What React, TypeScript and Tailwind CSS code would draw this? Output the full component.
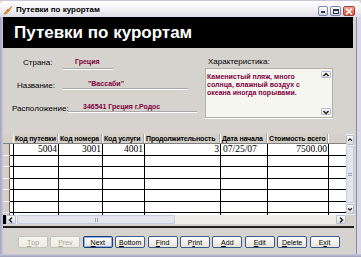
import React from 'react';

type Col = { title: string; w: string; value: string; right: boolean };

const columns: Col[] = [
  { title: 'Код путевки', w: 'w-[45px]', value: '5004', right: true },
  { title: 'Код номера', w: 'w-[44px]', value: '3001', right: true },
  { title: 'Код услуги', w: 'w-[42px]', value: '4001', right: true },
  { title: 'Продолжительность', w: 'w-[76px]', value: '3', right: true },
  { title: 'Дата начала', w: 'w-[47px]', value: '07/25/07', right: false },
  { title: 'Стоимость всего', w: 'w-[61px]', value: '7500.00', right: true },
];

const rowHeights = ['h-[12px]', 'h-[11px]', 'h-[12px]', 'h-[11px]', 'h-[12px]', 'h-[11px]', 'h-[11px]'];

const buttons = [
  { pre: '', key: 'T', post: 'op', disabled: true },
  { pre: '', key: 'P', post: 'rev', disabled: true },
  { pre: '', key: 'N', post: 'ext', focused: true },
  { pre: '', key: 'B', post: 'ottom' },
  { pre: '', key: 'F', post: 'ind' },
  { pre: 'P', key: 'r', post: 'int' },
  { pre: '', key: 'A', post: 'dd' },
  { pre: '', key: 'E', post: 'dit' },
  { pre: '', key: 'D', post: 'elete' },
  { pre: 'E', key: 'x', post: 'it' },
];

function Chevron({ dir }: { dir: 'up' | 'down' | 'left' | 'right' }) {
  const pts = {
    up: '1.5,5 4,2.5 6.5,5',
    down: '1.5,3 4,5.5 6.5,3',
    left: '5,1.5 2.5,4 5,6.5',
    right: '3,1.5 5.5,4 3,6.5',
  }[dir];
  return (
    <svg width="8" height="8" viewBox="0 0 8 8">
      <polyline points={pts} fill="none" stroke="#222" strokeWidth="1.5" />
    </svg>
  );
}

function ArrowBox({ dir, className }: { dir: 'up' | 'down' | 'left' | 'right'; className: string }) {
  return (
    <div className={`flex items-center justify-center border border-[#b4bed6] rounded-[1px] bg-gradient-to-b from-[#fafafa] to-[#dedcd6] ${className}`}>
      <Chevron dir={dir} />
    </div>
  );
}

function TitleBar() {
  return (
    <div className="h-[17px] flex items-end pb-[1px] bg-gradient-to-b from-[#ffffff] via-[#f2f2f6] to-[#dcdce6] rounded-t-[4px] border-t border-[#c8c8d8]">
      <svg width="11" height="10" viewBox="0 0 11 10" className="ml-[3px] mb-[1px]">
        <path d="M1 9 L5 4 L4 6 L9 1 L6 6 L7 5 L3 9 Z" fill="#f0a020" stroke="#c06010" strokeWidth="0.6" />
      </svg>
      <span className="ml-[2px] mb-[1px] text-[8px] leading-[10px] text-black font-bold whitespace-nowrap">Путевки по курортам</span>
      <div className="ml-auto mr-[6px] flex gap-[2px] items-end">
        <div className="w-[10px] h-[10px] border border-[#7884a8] rounded-[2px] bg-gradient-to-b from-white to-[#cfd0dc] flex items-end justify-center pb-[2px]">
          <div className="w-[4px] h-[2px] bg-[#303848]" />
        </div>
        <div className="w-[11px] h-[10px] border border-[#7884a8] rounded-[2px] bg-gradient-to-b from-white to-[#cfd0dc] flex items-center justify-center">
          <div className="w-[6px] h-[5px] border border-[#303848] border-t-2" />
        </div>
        <div className="w-[12px] h-[10px] border border-[#a04040] rounded-[2px] bg-gradient-to-b from-[#f8a890] to-[#d84828] flex items-center justify-center">
          <svg width="8" height="7" viewBox="0 0 8 7">
            <path d="M1 0.5 L7 6.5 M7 0.5 L1 6.5" stroke="#fff" strokeWidth="1.5" />
          </svg>
        </div>
      </div>
    </div>
  );
}

function Field({ label, value, rowClass, labelClass, boxClass }: { label: string; value: string; rowClass: string; labelClass: string; boxClass: string }) {
  return (
    <div className={`flex items-end ${rowClass}`}>
      <div className={`text-[8px] leading-[9px] whitespace-nowrap ${labelClass}`}>{label}</div>
      <div className={`border-b border-[#a8a8a8] shadow-[0_1px_0_#ffffff] text-[7px] font-bold leading-[8px] text-[#80003c] whitespace-nowrap ${boxClass}`}>{value}</div>
    </div>
  );
}

function Datasheet() {
  return (
    <div className="flex-1 min-w-0 flex flex-col bg-white overflow-hidden">
      <div className="flex h-[10px] shrink-0 bg-[#d4d0c8] border-b border-[#808080]">
        <div className="w-[11px] shrink-0 border-r border-white" />
        {columns.map((c) => (
          <div key={c.title} className={`${c.w} shrink-0 border-r border-white shadow-[inset_-1px_0_0_#a8a8a8] pl-[1px] text-[7px] tracking-[-0.15px] font-bold leading-[9px] whitespace-nowrap overflow-hidden`}>
            {c.title}
          </div>
        ))}
        <div className="flex-1" />
      </div>
      {rowHeights.map((h, i) => (
        <div key={i} className={`flex ${h} shrink-0`}>
          <div className="w-[7px] shrink-0 bg-[#d4d0c8] border-r border-b border-r-[#606060] border-b-[#f2f2f0]" />
          <div className="w-[4px] shrink-0 border-r border-b border-black" />
          {columns.map((c) => (
            <div
              key={c.title}
              className={`${c.w} shrink-0 border-r border-b border-black font-['Liberation_Serif',serif] text-[9.5px] leading-[11px] whitespace-nowrap overflow-hidden ${c.right ? 'text-right pr-[1px]' : 'pl-[2px]'}`}
            >
              {i === 0 ? c.value : ''}
            </div>
          ))}
          <div className="flex-1 border-b border-black" />
        </div>
      ))}
    </div>
  );
}

function VScroll() {
  return (
    <div className="w-[8px] shrink-0 flex flex-col bg-[#eeede6]">
      <ArrowBox dir="up" className="h-[10px] mt-[1px]" />
      <div className="flex-1 mx-0 my-[1px] border border-[#c4cce0] rounded-[1px] bg-[#e4e6ee] flex items-center justify-center">
        <div className="w-[4px] h-[3px] border-t border-b border-[#9aa4bc]" />
      </div>
      <ArrowBox dir="down" className="h-[10px] mb-[1px]" />
    </div>
  );
}

function HScroll() {
  return (
    <div className="flex h-[9px]">
      <div className="flex-1 min-w-0 flex bg-[#eeede6]">
        <div className="w-[3px] bg-black" />
        <ArrowBox dir="left" className="w-[10px]" />
        <div className="w-[158px] ml-[1px] border border-[#c4cce0] rounded-[1px] bg-[#e4e6ee] flex items-center justify-center">
          <div className="w-[3px] h-[4px] border-l border-r border-[#9aa4bc]" />
        </div>
        <div className="flex-1" />
        <ArrowBox dir="right" className="w-[10px]" />
      </div>
      <div className="w-[8px] bg-[#d4d0c8]" />
    </div>
  );
}

function NavButton({ b }: { b: (typeof buttons)[number] }) {
  const base = 'w-[30px] h-[12px] shrink-0 rounded-[2px] flex items-center justify-center text-[7px] leading-[9px] whitespace-nowrap bg-gradient-to-b';
  const look = b.disabled
    ? 'border border-[#c4c4bc] from-[#f6f6f2] to-[#eceae2] text-[#aca899]'
    : b.focused
      ? 'border border-[#1c3c78] shadow-[inset_0_0_0_1px_#8cb0e8] from-white to-[#e6e4da] text-black'
      : 'border border-[#3c5890] from-white to-[#e6e4da] text-black';
  return (
    <div className={`${base} ${look}`}>
      {b.pre}
      <span className="underline">{b.key}</span>
      {b.post}
    </div>
  );
}

export default function App() {
  return (
    <div className="w-[361px] h-[257px] flex flex-col overflow-hidden bg-[#d4d0c8] font-['Liberation_Sans',Arial,sans-serif] text-black select-none">
      <TitleBar />
      <div className="flex flex-1 min-h-0">
        <div className="w-[3px] bg-gradient-to-r from-[#a4a4c2] to-[#c8c8dc]" />
        <div className="flex-1 min-w-0 flex flex-col bg-[#d6d3ce]">
          {/* form header */}
          <div className="h-[31px] mr-[3px] bg-black flex items-center pl-[11px]">
            <span className="text-white font-bold text-[17px] leading-[20px] whitespace-nowrap">Путевки по курортам</span>
          </div>

          {/* fields */}
          <div className="h-[86px] flex">
            <div className="w-[202px] shrink-0 flex flex-col">
              <Field label="Страна:" value="Греция" rowClass="mt-[8px] h-[13px]" labelClass="ml-[20px] w-[40px] mb-[2px]" boxClass="w-[50px] h-[13px] pl-[12px] pt-[2px]" />
              <Field label="Название:" value={'"Вассаби"'} rowClass="mt-[11px] h-[9px]" labelClass="ml-[14px] w-[46px] -mb-[1px]" boxClass="w-[125px] h-[9px] pl-[25px]" />
              <Field label="Расположение:" value="346541 Греция г.Родос" rowClass="mt-[14px] h-[9px]" labelClass="ml-[9px] w-[56px] -mb-[1px]" boxClass="w-[129px] h-[9px] pl-[15px]" />
            </div>
            <div className="flex flex-col">
              <div className="mt-[9px] h-[11px] pl-[3px] text-[8px] leading-[10px] whitespace-nowrap">Характеристика:</div>
              <div className="w-[128px] h-[50px] flex border border-[#b0b0a8] bg-[#f6f6f1] shadow-[0_1px_0_#ffffff]">
                <div className="flex-1 pt-[4px] pl-[1px] text-[7px] font-bold leading-[8px] text-[#80003c] whitespace-nowrap">
                  Каменистый пляж, много
                  <br />
                  солнца, влажный воздух с
                  <br />
                  океана иногда порывами.
                </div>
                <div className="w-[10px] flex flex-col justify-between py-[2px] mr-[1px]">
                  <ArrowBox dir="up" className="h-[7px]" />
                  <ArrowBox dir="down" className="h-[7px]" />
                </div>
              </div>
            </div>
          </div>

          {/* subform datasheet */}
          <div className="flex flex-col h-[94px] mr-[2px]">
            <div className="flex h-[81px]">
              <Datasheet />
              <VScroll />
            </div>
            <HScroll />
            <div className="h-[2px]" />
            <div className="h-[2px] bg-[#202020]" />
          </div>

          {/* navigation buttons */}
          <div className="mt-[8px] h-[12px] flex pl-[15px] gap-[2.4px]">
            {buttons.map((b) => (
              <NavButton key={b.key + b.post} b={b} />
            ))}
          </div>
        </div>
        <div className="w-[5px] flex">
          <div className="w-[1px] bg-[#8c8ca6]" />
          <div className="flex-1 bg-[#d8d8e6]" />
        </div>
      </div>
      <div className="h-[3px] bg-gradient-to-b from-[#c8c8da] to-[#a0a0bc]" />
    </div>
  );
}
